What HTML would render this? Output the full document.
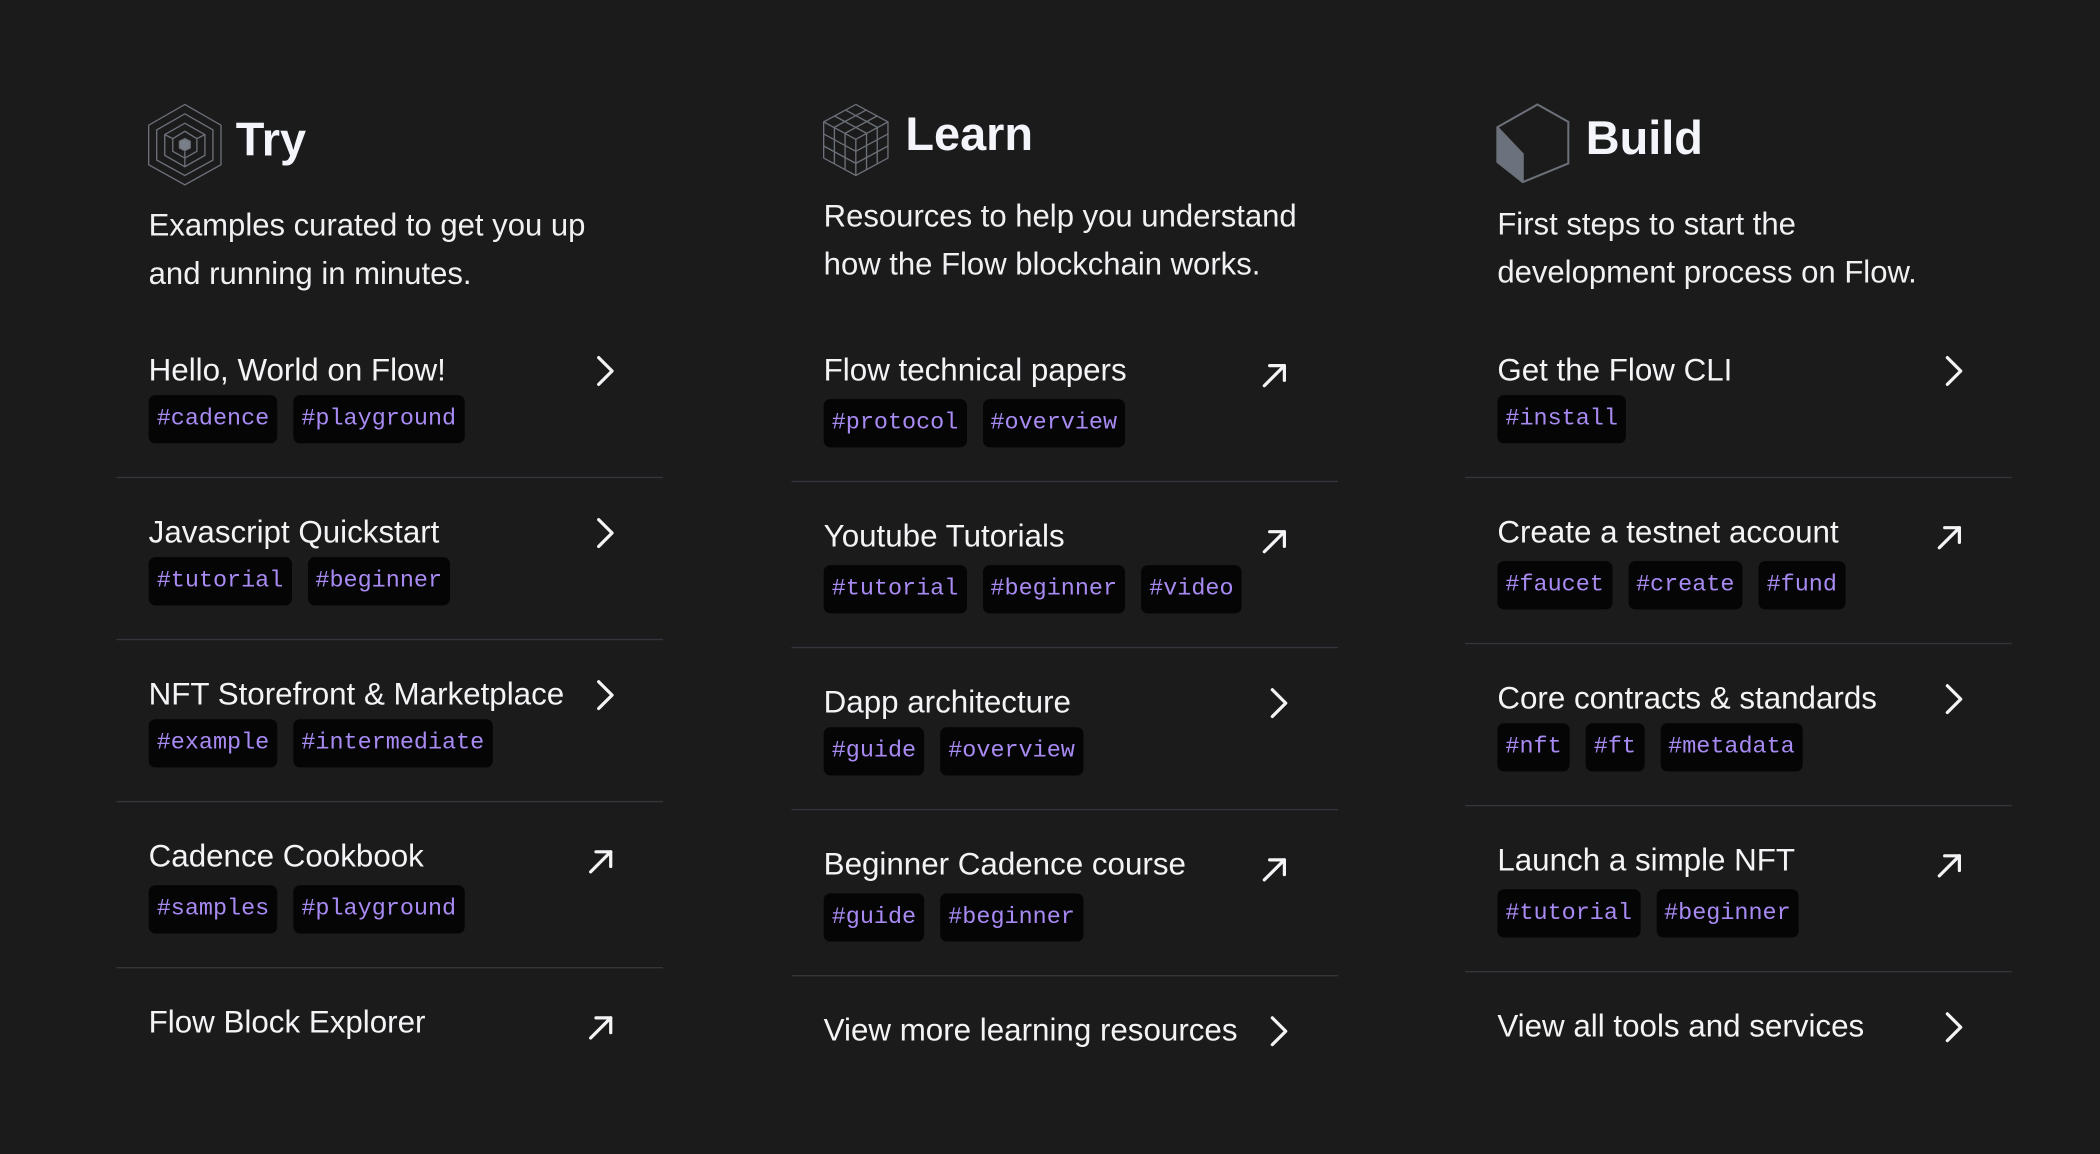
<!DOCTYPE html>
<html><head><meta charset="utf-8"><style>
html,body{margin:0;padding:0;background:#1b1b1c;width:2100px;height:1154px;overflow:hidden}
#w{position:absolute;left:0;top:0;width:1568px;height:862px;transform:scale(1.3393);transform-origin:0 0;font-family:"Liberation Sans",sans-serif;color:#f1f1f3}
.a{position:absolute;white-space:nowrap}
.h{font-size:35px;font-weight:bold;line-height:40px;color:#f3f5fb}
.d{font-size:23.2px;line-height:36px;color:#f1f1f3}
.t{font-size:23.4px;line-height:30px;color:#f4f4f6}
.tags{position:absolute;display:flex;gap:12px}
.tag{background:#050506;border-radius:5px;height:36px;line-height:36px;padding:0 6px;font-family:"Liberation Mono",monospace;font-size:17.5px;color:#a88af3}
.ln{position:absolute;height:1px;background:#34363c;width:408px}
svg.ic{position:absolute}
</style></head><body><div id="w">

<!-- TRY -->
<svg class="ic" style="left:110px;top:77px" width="56" height="62" viewBox="0 0 56 62" fill="none" stroke="#6c7078" stroke-width="1">
<polygon points="28,1 55,16.5 55,46 28,61 1,46 1,16.5"/>
<polygon points="28,8 49,20 49,42.5 28,54 7,42.5 7,20"/>
<polygon points="28,15 43,23.5 43,39 28,47.5 13,39 13,23.5"/>
<polygon points="28,21 37,26.5 37,36 28,41 19,36 19,26.5"/>
<line x1="28" y1="47.5" x2="28" y2="36"/>
<line x1="13" y1="23.5" x2="19" y2="26.5"/><line x1="43" y1="23.5" x2="37" y2="26.5"/>
<polygon points="28,26.5 32,28.5 32,33.5 28,35.5 24,33.5 24,28.5" fill="#7a7e88"/>
</svg>
<div class="a h" style="left:176px;top:85px">Try</div>
<div class="a d" style="left:111px;top:150px">Examples curated to get you up<br>and running in minutes.</div>

<div class="a t" style="left:111px;top:261px">Hello, World on Flow!</div>
<div class="tags" style="left:111px;top:295px"><span class="tag">#cadence</span><span class="tag">#playground</span></div>
<div class="ln" style="left:87px;top:356px"></div>
<div class="a t" style="left:111px;top:382px">Javascript Quickstart</div>
<div class="tags" style="left:111px;top:416px"><span class="tag">#tutorial</span><span class="tag">#beginner</span></div>
<div class="ln" style="left:87px;top:477px"></div>
<div class="a t" style="left:111px;top:503px">NFT Storefront &amp; Marketplace</div>
<div class="tags" style="left:111px;top:537px"><span class="tag">#example</span><span class="tag">#intermediate</span></div>
<div class="ln" style="left:87px;top:598px"></div>
<div class="a t" style="left:111px;top:624px">Cadence Cookbook</div>
<div class="tags" style="left:111px;top:661px"><span class="tag">#samples</span><span class="tag">#playground</span></div>
<div class="ln" style="left:87px;top:722px"></div>
<div class="a t" style="left:111px;top:748px">Flow Block Explorer</div>

<!-- LEARN -->
<svg class="ic" style="left:614px;top:77px" width="50" height="55" viewBox="0 0 50 55" fill="none" stroke="#6c7078" stroke-width="1">
<polygon points="25,1 49,14 49,41 25,54 1,41 1,14"/>
<polyline points="1,14 25,27 49,14"/><line x1="25" y1="27" x2="25" y2="54"/>
<line x1="9" y1="9.5" x2="33" y2="22.5"/><line x1="17" y1="5" x2="41" y2="18"/>
<line x1="41" y1="9.5" x2="17" y2="22.5"/><line x1="33" y1="5" x2="9" y2="18"/>
<line x1="1" y1="23" x2="25" y2="36"/><line x1="1" y1="32" x2="25" y2="45"/>
<line x1="49" y1="23" x2="25" y2="36"/><line x1="49" y1="32" x2="25" y2="45"/>
<line x1="9" y1="18" x2="9" y2="45.5"/><line x1="17" y1="22.5" x2="17" y2="50"/>
<line x1="41" y1="18" x2="41" y2="45.5"/><line x1="33" y1="22.5" x2="33" y2="50"/>
</svg>
<div class="a h" style="left:676px;top:81px">Learn</div>
<div class="a d" style="left:615px;top:143px">Resources to help you understand<br>how the Flow blockchain works.</div>

<div class="a t" style="left:615px;top:261px">Flow technical papers</div>
<div class="tags" style="left:615px;top:298px"><span class="tag">#protocol</span><span class="tag">#overview</span></div>
<div class="ln" style="left:591px;top:359px"></div>
<div class="a t" style="left:615px;top:385px">Youtube Tutorials</div>
<div class="tags" style="left:615px;top:422px"><span class="tag">#tutorial</span><span class="tag">#beginner</span><span class="tag">#video</span></div>
<div class="ln" style="left:591px;top:483px"></div>
<div class="a t" style="left:615px;top:509px">Dapp architecture</div>
<div class="tags" style="left:615px;top:543px"><span class="tag">#guide</span><span class="tag">#overview</span></div>
<div class="ln" style="left:591px;top:604px"></div>
<div class="a t" style="left:615px;top:630px">Beginner Cadence course</div>
<div class="tags" style="left:615px;top:667px"><span class="tag">#guide</span><span class="tag">#beginner</span></div>
<div class="ln" style="left:591px;top:728px"></div>
<div class="a t" style="left:615px;top:754px">View more learning resources</div>

<!-- BUILD -->
<svg class="ic" style="left:1117px;top:77px" width="55" height="61" viewBox="0 0 55 61" fill="none" stroke="#6c7078" stroke-width="1.5">
<polygon points="1,18 20,38 20,59 1,44" fill="#6b727d" stroke="none"/>
<polygon points="31,1 54,14 54,45 20,59 1,44 1,18"/>
<polyline points="1,18 20,38 20,59"/>
</svg>
<div class="a h" style="left:1184px;top:84px">Build</div>
<div class="a d" style="left:1118px;top:149px">First steps to start the<br>development process on Flow.</div>

<div class="a t" style="left:1118px;top:261px">Get the Flow CLI</div>
<div class="tags" style="left:1118px;top:295px"><span class="tag">#install</span></div>
<div class="ln" style="left:1094px;top:356px"></div>
<div class="a t" style="left:1118px;top:382px">Create a testnet account</div>
<div class="tags" style="left:1118px;top:419px"><span class="tag">#faucet</span><span class="tag">#create</span><span class="tag">#fund</span></div>
<div class="ln" style="left:1094px;top:480px"></div>
<div class="a t" style="left:1118px;top:506px">Core contracts &amp; standards</div>
<div class="tags" style="left:1118px;top:540px"><span class="tag">#nft</span><span class="tag">#ft</span><span class="tag">#metadata</span></div>
<div class="ln" style="left:1094px;top:601px"></div>
<div class="a t" style="left:1118px;top:627px">Launch a simple NFT</div>
<div class="tags" style="left:1118px;top:664px"><span class="tag">#tutorial</span><span class="tag">#beginner</span></div>
<div class="ln" style="left:1094px;top:725px"></div>
<div class="a t" style="left:1118px;top:751px">View all tools and services</div>

<!-- arrows -->
<svg class="ic" style="left:0;top:0" width="1568" height="862" viewBox="0 0 1568 862" fill="none" stroke="#f4f4f6" stroke-width="2.4" stroke-linecap="round" stroke-linejoin="round">
<defs>
<g id="chev"><polyline points="-5,-10 5,0 -5,10"/></g>
<g id="ext"><line x1="-8" y1="8" x2="7" y2="-7"/><polyline points="-4,-7 7,-7 7,4"/></g>
</defs>
<use href="#chev" x="452" y="277"/><use href="#chev" x="452" y="398"/><use href="#chev" x="452" y="519"/>
<use href="#ext" x="449" y="643"/><use href="#ext" x="449" y="767"/>
<use href="#ext" x="952" y="280"/><use href="#ext" x="952" y="404"/><use href="#chev" x="955" y="525"/>
<use href="#ext" x="952" y="649"/><use href="#chev" x="955" y="770"/>
<use href="#chev" x="1459" y="277"/><use href="#ext" x="1456" y="401"/><use href="#chev" x="1459" y="522"/>
<use href="#ext" x="1456" y="646"/><use href="#chev" x="1459" y="767"/>
</svg>
</div></body></html>
